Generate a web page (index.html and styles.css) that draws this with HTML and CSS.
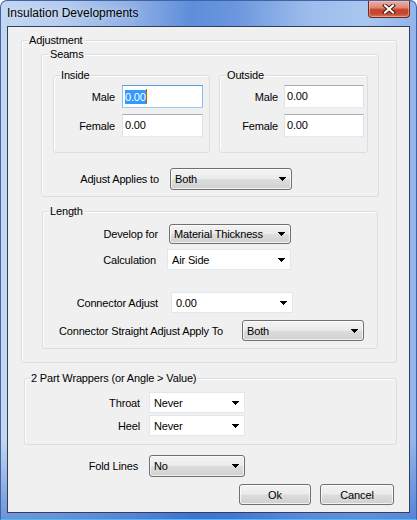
FILE: index.html
```html
<!DOCTYPE html>
<html>
<head>
<meta charset="utf-8">
<link rel="stylesheet" href="styles.css">
</head>
<body>
<div class="window">
  <div class="titlebar">
    <span class="title">Insulation Developments</span>
    <div class="close">
      <svg width="14" height="10" viewBox="0 0 14 10"><path d="M3 1.5L11 8.5M11 1.5L3 8.5" stroke="#4a1f16" stroke-width="4" stroke-linecap="square"/><path d="M3 1.5L11 8.5M11 1.5L3 8.5" stroke="#fff" stroke-width="2" stroke-linecap="square"/></svg>
    </div>
  </div>
  <div class="client">
    <div class="group adjust">
      <span class="legend lg-adjust">Adjustment</span>
      <div class="group seams">
        <span class="legend lg-seams">Seams</span>
        <div class="seam-cols">
          <div class="group inside">
            <span class="legend lg-side">Inside</span>
            <div class="pair-rows">
              <div class="row"><span class="lbl in-lbl">Male</span><div class="textbox in-box focus"><span class="sel">0.00</span><span class="caret"></span></div></div>
              <div class="row"><span class="lbl in-lbl">Female</span><div class="textbox in-box">0.00</div></div>
            </div>
          </div>
          <div class="group outside">
            <span class="legend lg-side">Outside</span>
            <div class="pair-rows">
              <div class="row"><span class="lbl out-lbl">Male</span><div class="textbox out-box">0.00</div></div>
              <div class="row"><span class="lbl out-lbl">Female</span><div class="textbox out-box">0.00</div></div>
            </div>
          </div>
        </div>
        <div class="row applies"><span class="lbl applies-lbl">Adjust Applies to</span><div class="combo btn-combo w122 h22"><span>Both</span><svg class="arrow" width="7" height="4" viewBox="0 0 7 4"><path d="M0 0h7v1H0zM1 1h5v1H1zM2 2h3v1H2zM3 3h1v1H3z" fill="#000"/></svg></div></div>
      </div>
      <div class="group length">
        <span class="legend lg-side">Length</span>
        <div class="row develop"><span class="lbl develop-lbl">Develop for</span><div class="combo btn-combo w122 h20"><span>Material Thickness</span><svg class="arrow" width="7" height="4" viewBox="0 0 7 4"><path d="M0 0h7v1H0zM1 1h5v1H1zM2 2h3v1H2zM3 3h1v1H3z" fill="#000"/></svg></div></div>
        <div class="row calc"><span class="lbl calc-lbl">Calculation</span><div class="combo white-combo w124 h21"><span>Air Side</span><svg class="arrow" width="7" height="4" viewBox="0 0 7 4"><path d="M0 0h7v1H0zM1 1h5v1H1zM2 2h3v1H2zM3 3h1v1H3z" fill="#000"/></svg></div></div>
        <div class="row conn"><span class="lbl conn-lbl">Connector Adjust</span><div class="combo white-combo w122 h21"><span>0.00</span><svg class="arrow" width="7" height="4" viewBox="0 0 7 4"><path d="M0 0h7v1H0zM1 1h5v1H1zM2 2h3v1H2zM3 3h1v1H3z" fill="#000"/></svg></div></div>
        <div class="row straight"><span class="lbl straight-lbl">Connector Straight Adjust Apply To</span><div class="combo btn-combo w122 h21"><span>Both</span><svg class="arrow" width="7" height="4" viewBox="0 0 7 4"><path d="M0 0h7v1H0zM1 1h5v1H1zM2 2h3v1H2zM3 3h1v1H3z" fill="#000"/></svg></div></div>
      </div>
    </div>
    <div class="group wrappers">
      <span class="legend lg-wrap">2 Part Wrappers (or Angle &gt; Value)</span>
      <div class="row throat"><span class="lbl wrap-lbl">Throat</span><div class="combo white-combo w96 h21"><span>Never</span><svg class="arrow" width="7" height="4" viewBox="0 0 7 4"><path d="M0 0h7v1H0zM1 1h5v1H1zM2 2h3v1H2zM3 3h1v1H3z" fill="#000"/></svg></div></div>
      <div class="row heel"><span class="lbl wrap-lbl">Heel</span><div class="combo white-combo w96 h21"><span>Never</span><svg class="arrow" width="7" height="4" viewBox="0 0 7 4"><path d="M0 0h7v1H0zM1 1h5v1H1zM2 2h3v1H2zM3 3h1v1H3z" fill="#000"/></svg></div></div>
    </div>
    <div class="row fold"><span class="lbl fold-lbl">Fold Lines</span><div class="combo btn-combo w96 h22"><span>No</span><svg class="arrow" width="7" height="4" viewBox="0 0 7 4"><path d="M0 0h7v1H0zM1 1h5v1H1zM2 2h3v1H2zM3 3h1v1H3z" fill="#000"/></svg></div></div>
    <div class="buttons">
      <div class="button ok">Ok</div>
      <div class="button cancel">Cancel</div>
    </div>
  </div>
</div>
</body>
</html>
```
FILE: styles.css
```css
body {
  margin: 0;
  font-family: "Liberation Sans", Arial, sans-serif;
  font-size: 11px;
  letter-spacing: -0.15px;
  color: #000;
}

.window {
  width: 417px;
  height: 520px;
  box-sizing: border-box;
  border: 1px solid #3f63a3;
  border-bottom-color: #3cc3ef;
  border-radius: 7px 7px 0 0;
  padding: 0 6px 6px;
  background:
    linear-gradient(to bottom, rgba(40, 90, 200, 0) 0, rgba(40, 90, 200, 0) 440px, rgba(40, 90, 200, 0.55) 518px),
    linear-gradient(90deg, #c3d7f1 0%, #b6cdef 14%, #8dafe5 32%, #5e8dda 46%, #6a96de 56%, #9dbcec 74%, #a9c6ef 88%, #93b4ea 100%);
}

.titlebar {
  height: 25px;
  display: flex;
  justify-content: space-between;
  align-items: flex-start;
}

.title {
  font-size: 12px;
  letter-spacing: 0;
  line-height: 25px;
  color: #000;
  text-shadow: 0 0 6px rgba(255, 255, 255, 0.7);
}

.close {
  width: 42px;
  height: 17px;
  box-sizing: border-box;
  border: 1px solid #6a2a1e;
  border-top: none;
  border-radius: 0 0 4px 4px;
  background: linear-gradient(#eab0a3 0%, #dd8a78 40%, #c8432b 55%, #c54a30 80%, #d6775e 100%);
  box-shadow: inset 0 0 0 1px rgba(255, 200, 190, 0.5);
  display: flex;
  align-items: center;
  justify-content: center;
}

.client {
  height: 487px;
  box-sizing: border-box;
  border: 1px solid #2f3f5e;
  background: #f0f0f0;
  overflow: hidden;
}

.group {
  box-sizing: border-box;
  border: 1px solid #d5dfe5;
  border-radius: 3px;
  box-shadow: inset 1px 1px 0 #fff;
}

.legend {
  display: block;
  width: max-content;
  height: 13px;
  line-height: 13px;
  margin: -7px 0 -6px 0;
  padding: 0 1px;
  background: #f0f0f0;
  position: relative;
}

.lg-adjust { margin-left: 6px; }
.lg-seams { margin-left: 7px; }
.lg-side { margin-left: 6px; }
.lg-wrap { margin-left: 5px; }

.adjust {
  margin: 13px 0 0 13px;
  width: 376px;
  height: 323px;
}

.seams {
  margin: 13px 0 0 19px;
  width: 338px;
  height: 143px;
}

.seam-cols {
  display: flex;
  gap: 9px;
  margin: 20px 0 0 11px;
}

.inside { width: 157px; height: 78px; }
.outside { width: 149px; height: 78px; }

.pair-rows {
  display: flex;
  flex-direction: column;
  gap: 6px;
  margin-top: 9px;
}

.row {
  display: flex;
  align-items: center;
}

.lbl {
  text-align: right;
  white-space: nowrap;
  flex: none;
}

.in-lbl { width: 61px; margin-right: 7px; }
.out-lbl { width: 58px; margin-right: 6px; }

.textbox {
  height: 23px;
  box-sizing: border-box;
  background: #fff;
  border: 1px solid;
  border-color: #abadb3 #dbdfe6 #e3e9ef #e2e3ea;
  padding: 0 2px;
  line-height: 21px;
  display: flex;
  align-items: center;
}

.in-box { width: 81px; }
.out-box { width: 80px; }

.textbox.focus {
  border-color: #5a9be0 #8fbdec #9ec7ef #8fbdec;
}

.sel {
  background: #3399ff;
  color: #fff;
  line-height: 14px;
  height: 14px;
}

.caret {
  width: 1px;
  height: 15px;
  background: #c0600a;
}

.combo {
  box-sizing: border-box;
  display: flex;
  align-items: center;
  justify-content: space-between;
  padding: 0 5px 0 4px;
  flex: none;
}

.btn-combo {
  border: 1px solid #707070;
  border-radius: 3px;
  background: linear-gradient(#f3f3f3 0%, #ebebeb 48%, #dddddd 52%, #d0d0d0 100%);
  box-shadow: inset 0 0 0 1px rgba(255, 255, 255, 0.7);
}

.white-combo {
  border: 1px solid #e3e6ea;
  background: #fff;
}

.w122 { width: 122px; }
.w124 { width: 124px; }
.w96 { width: 96px; }
.h20 { height: 20px; }
.h21 { height: 21px; }
.h22 { height: 22px; }

.arrow { flex: none; }

.applies { margin-top: 15px; }
.applies-lbl { width: 117px; margin-right: 11px; }

.length {
  margin: 14px 0 0 20px;
  width: 336px;
  height: 138px;
}

.develop { margin-top: 12px; }
.develop-lbl { width: 115px; margin-right: 11px; }
.calc { margin-top: 5px; }
.calc-lbl { width: 113px; margin-right: 11px; }
.conn { margin-top: 22px; }
.conn-lbl { width: 115px; margin-right: 13px; }
.straight { margin-top: 7px; }
.straight-lbl { width: 180px; margin-right: 19px; }

.wrappers {
  margin: 15px 0 0 16px;
  width: 373px;
  height: 67px;
}

.throat { margin-top: 13px; }
.heel { margin-top: 2px; }
.wrap-lbl { width: 115px; margin-right: 9px; }

.fold { margin-top: 10px; }
.fold-lbl { width: 130px; margin-right: 11px; }

.buttons {
  display: flex;
  justify-content: flex-end;
  gap: 9px;
  margin-top: 7px;
  padding-right: 15px;
}

.button {
  height: 21px;
  box-sizing: border-box;
  border: 1px solid #707070;
  border-radius: 3px;
  background: linear-gradient(#f3f3f3 0%, #ebebeb 48%, #dddddd 52%, #d0d0d0 100%);
  box-shadow: inset 0 0 0 1px rgba(255, 255, 255, 0.7);
  display: flex;
  align-items: center;
  justify-content: center;
}

.ok { width: 72px; }
.cancel { width: 74px; }
```
